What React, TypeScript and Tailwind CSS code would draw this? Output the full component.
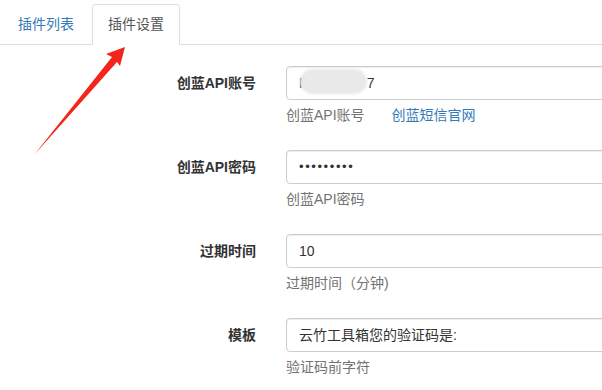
import React from "react";

const FONT = '"Liberation Sans", "Noto Sans CJK SC", sans-serif';

function Row({
  label,
  children,
  help,
}: {
  label: string;
  children: React.ReactNode;
  help: React.ReactNode;
}) {
  return (
    <div className="flex mb-[15px]">
      <div className="w-[271px] shrink-0 pr-[15px] pt-[7px] text-right text-[14px] leading-[20px] font-bold text-[#333]">
        {label}
      </div>
      <div className="w-[500px] shrink-0 pl-[15px]">
        <div className="relative h-[34px] border border-[#ccc] rounded-[4px] shadow-[inset_0_1px_1px_rgba(0,0,0,0.075)] px-[12px] flex items-center text-[14px] text-[#333]">
          {children}
        </div>
        <div className="mt-[5px] mb-[10px] text-[14px] leading-[20px] text-[#737373]">{help}</div>
      </div>
    </div>
  );
}

export default function App() {
  return (
    <div
      className="relative w-[602px] h-[390px] overflow-hidden bg-white"
      style={{ fontFamily: FONT }}
    >
      <div className="flex pt-[4px] border-b border-[#ddd] h-[45px]">
        <div className="ml-[2px] h-[41px] px-[15px] flex items-center text-[14px] text-[#337ab7] border border-transparent">
          插件列表
        </div>
        <div className="ml-[2px] h-[41px] px-[15px] flex items-center text-[14px] text-[#555] border border-[#ddd] border-b-white rounded-t-[4px] bg-white">
          插件设置
        </div>
      </div>

      <div className="pt-[21px]">
        <Row
          label="创蓝API账号"
          help={
            <span>
              创蓝API账号
              <span className="ml-[27px] text-[#337ab7]">创蓝短信官网</span>
            </span>
          }
        >
          <span className="relative">
            <span className="text-[#333]">M</span>
            <span className="text-white">xxxxxxxx</span>
            <span className="text-[#333]">7</span>
            <span className="absolute left-[1px] top-[-4px] w-[67px] h-[25px] rounded-full bg-[#e9e9e9] blur-[1px]" />
          </span>
        </Row>
        <Row label="创蓝API密码" help="创蓝API密码">
          <span className="tracking-[1.6px] text-[#333] text-[13px]">•••••••••</span>
        </Row>
        <Row label="过期时间" help="过期时间（分钟)">
          10
        </Row>
        <Row label="模板" help="验证码前字符">
          云竹工具箱您的验证码是:
        </Row>
      </div>

      <svg
        className="absolute left-0 top-0 pointer-events-none"
        width="602"
        height="390"
        viewBox="0 0 602 390"
      >
        <polygon
          points="125,47 106,54 112,57 34,155 117,62 120,66"
          fill="#f2261a"
        />
      </svg>
    </div>
  );
}
